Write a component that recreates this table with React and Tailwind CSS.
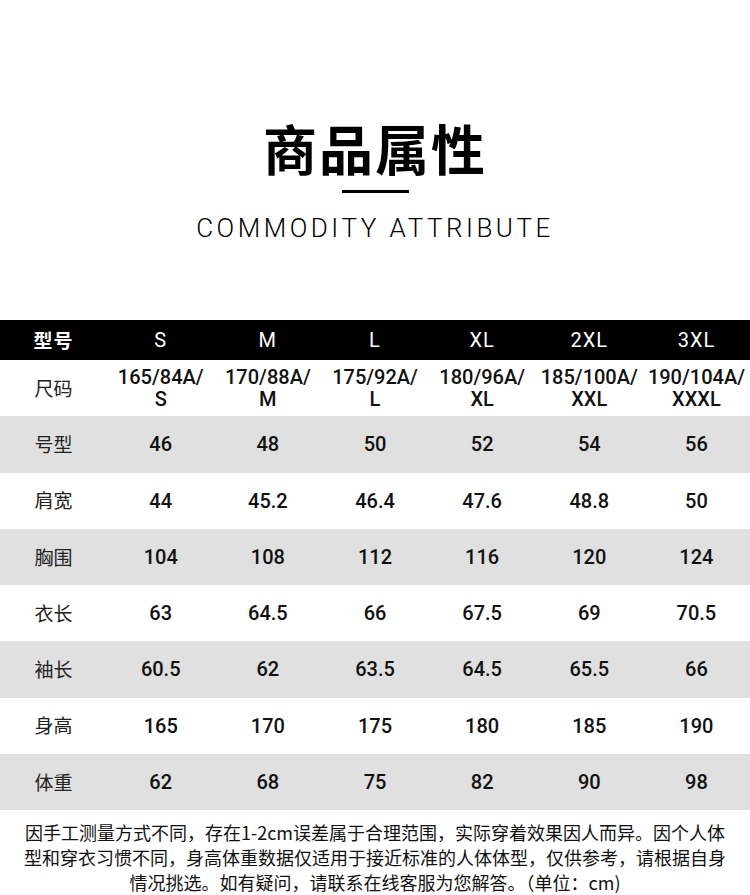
const cols = ["S", "M", "L", "XL", "2XL", "3XL"];

const rows = [
  { label: "尺码", values: [["165/84A/", "S"], ["170/88A/", "M"], ["175/92A/", "L"], ["180/96A/", "XL"], ["185/100A/", "XXL"], ["190/104A/", "XXXL"]] },
  { label: "号型", values: ["46", "48", "50", "52", "54", "56"] },
  { label: "肩宽", values: ["44", "45.2", "46.4", "47.6", "48.8", "50"] },
  { label: "胸围", values: ["104", "108", "112", "116", "120", "124"] },
  { label: "衣长", values: ["63", "64.5", "66", "67.5", "69", "70.5"] },
  { label: "袖长", values: ["60.5", "62", "63.5", "64.5", "65.5", "66"] },
  { label: "身高", values: ["165", "170", "175", "180", "185", "190"] },
  { label: "体重", values: ["62", "68", "75", "82", "90", "98"] },
];

function App() {
  return (
    <div className="w-[750px] h-[895px] bg-white flex flex-col overflow-hidden font-['Noto_Sans_CJK_SC',sans-serif]">

      <div className="flex flex-col items-center pt-[108px] h-[320px]">
        <h1 className="text-[54px] leading-[80px] font-bold text-black tracking-[2px]">
          商品属性
        </h1>
        <div className="w-[67px] h-[3px] bg-black mt-[2px]" />
        <p className="text-[26px] leading-[36px] mt-[17px] text-black tracking-[3.5px] font-light font-['Roboto',sans-serif]">
          COMMODITY ATTRIBUTE
        </p>
      </div>

      <div className="grid grid-cols-7 h-[40px] bg-black text-white items-center text-center">
        <div className="text-[19px] font-bold tracking-[1px]">型号</div>
        {cols.map((c) => (
          <div key={c} className="text-[20px] tracking-[1px] font-['Roboto',sans-serif]">{c}</div>
        ))}
      </div>

      {rows.map((r, i) => (
        <div
          key={r.label}
          className={
            i % 2 === 1
              ? "grid grid-cols-7 h-[56.25px] items-center text-center bg-[#e0e0e0]"
              : "grid grid-cols-7 h-[56.25px] items-center text-center bg-white"
          }
        >
          <div className="text-[19px] text-[#222]">{r.label}</div>
          {r.values.map((v, j) => (
            <div key={j} className="text-[20px] font-medium text-[#111] leading-[22px] font-['Roboto',sans-serif]">
              {Array.isArray(v) ? (
                <>
                  <div>{v[0]}</div>
                  <div>{v[1]}</div>
                </>
              ) : (
                v
              )}
            </div>
          ))}
        </div>
      ))}

      <div className="flex-1 flex items-start justify-center pt-[10px]">
        <p className="w-[710px] text-center text-[18px] leading-[25px] text-[#111]">
          因手工测量方式不同，存在1-2cm误差属于合理范围，实际穿着效果因人而异。因个人体型和穿衣习惯不同，身高体重数据仅适用于接近标准的人体体型，仅供参考，请根据自身情况挑选。如有疑问，请联系在线客服为您解答。（单位：cm)
        </p>
      </div>

    </div>
  );
}

export default App;
